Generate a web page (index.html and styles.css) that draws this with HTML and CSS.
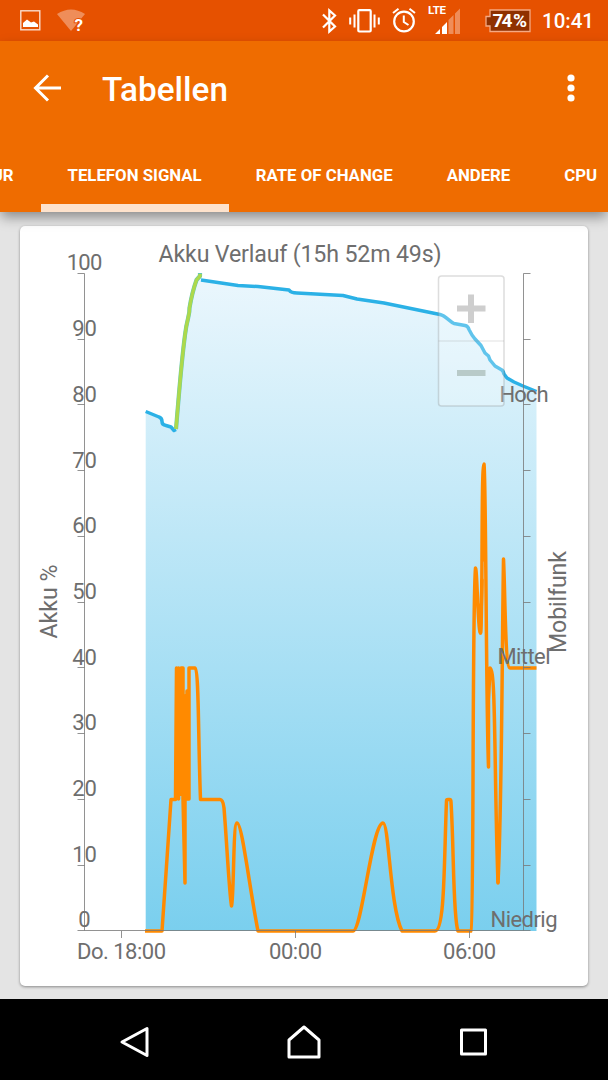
FILE: index.html
```html
<!DOCTYPE html>
<html lang="de">
<head>
  <meta charset="UTF-8">
  <title>Tabellen</title>
  <link rel="stylesheet" href="styles.css">
</head>
<body>
  <div class="screen">
    <div class="status-bar">
      <div class="status-left">
        <svg width="21" height="21" viewBox="0 0 21 21">
          <rect x=".8" y=".8" width="19" height="19" fill="none" stroke="#fff" stroke-opacity=".8" stroke-width="1.4"/>
          <path d="M3 17v-4l4-3.5 4 3 3-1 4 3V17z" fill="#fff"/>
        </svg>
        <svg class="wifi" width="30" height="24" viewBox="0 0 30 24">
          <path d="M0 5Q14 -4 28 5L14 22z" fill="#fff" fill-opacity=".35"/>
          <text x="17.5" y="21.5" class="wifi-mark">?</text>
        </svg>
      </div>
      <div class="status-right">
        <svg width="17" height="26" viewBox="0 0 17 26">
          <path d="M2 6.5L14 18.5 8.3 23.5V2.5L14 7.5 2 19.5" fill="none" stroke="#fff" stroke-width="2.2"/>
        </svg>
        <svg class="vibrate" width="31" height="24" viewBox="0 0 31 24">
          <rect x="9.3" y="1.2" width="12.4" height="21.3" rx="1" fill="none" stroke="#fff" stroke-width="2.2"/>
          <path d="M5.5 5.5v13M25.5 5.5v13M1.2 8.5v7M29.8 8.5v7" stroke="#fff" stroke-width="2"/>
        </svg>
        <svg class="alarm" width="24" height="25" viewBox="0 0 24 25">
          <circle cx="12" cy="13.5" r="9.8" fill="none" stroke="#fff" stroke-width="2.2"/>
          <path d="M1 5l5.500-4.200M23 5l-5.500-4.200M11.800 7.500v6.500l4.700 3" fill="none" stroke="#fff" stroke-width="2"/>
        </svg>
        <svg class="signal" width="34" height="32" viewBox="0 0 34 32">
          <text x="0" y="9.5" textLength="18" class="lte">LTE</text>
          <path d="M7 30l5-5v5zM14 30v-7l5-5v12z" fill="#fff"/>
          <path d="M20.500 30V16l5-5v19zM27 30V9.500l5-5V30z" fill="#fff" fill-opacity=".35"/>
        </svg>
        <svg class="battery" width="46" height="24" viewBox="0 0 46 24">
          <path d="M5 1H45V22.500H5V17H1V7.500H5z" fill="#8f3100" stroke="#f5a983" stroke-width="1.3"/>
          <text x="7.5" y="17.7" textLength="34.5" class="battery-text">74 %</text>
        </svg>
        <span class="clock">10:41</span>
      </div>
    </div>

    <header class="app-bar">
      <div class="toolbar">
        <svg width="28" height="28" viewBox="0 0 28 28">
          <path d="M15 1.500L2.500 14 15 26.500M2.500 14H28" fill="none" stroke="#fff" stroke-width="3"/>
        </svg>
        <h1>Tabellen</h1>
        <svg class="more" width="8" height="28" viewBox="0 0 8 28">
          <circle cx="4" cy="4" r="3.6"/><circle cx="4" cy="14" r="3.6"/><circle cx="4" cy="24" r="3.6"/>
        </svg>
      </div>
      <nav class="tabs">
        <a class="tab tab-cut">TEMPERATUR</a>
        <a class="tab tab-active">TELEFON SIGNAL</a>
        <a class="tab">RATE OF CHANGE</a>
        <a class="tab">ANDERE</a>
        <a class="tab">CPU</a>
      </nav>
    </header>

    <main class="content">
      <div class="card">
        <svg class="chart" viewBox="20 226 568 760">
          <defs>
            <linearGradient id="fill" gradientUnits="userSpaceOnUse" x1="0" y1="273" x2="0" y2="931">
              <stop offset="0" stop-color="#ebf7fd"/>
              <stop offset="1" stop-color="#7acfee"/>
            </linearGradient>
          </defs>

          <!-- battery level -->
          <path fill="url(#fill)" d="M145.700 411.500L159 417 163 420 164 424.500 172 427 176 430 C180 395 182 340 190 307 C192 291 196 280 200.500 274.500L202 280 236 285 258 286.500 289 290 295 293 343 295.500 357 299 384 303 440 314.500 454 323 467 326 480 345 498 368 505 373 509 378 523 386 536.500 391V931H145.700z"/>
          <path class="level" d="M145.700 411.500L159 417Q162 418 162 421.500Q162 425 166 425.500L171 427 174 430.500 176 429.500"/>
          <path class="level" d="M201 280L238 285.500 258 286.500 289 290Q291 293 297 293L343 295.500Q349 297 357 299L384 303 440 314.500C446 316 449 321 454 323.500L465 325.500Q468 326 469 329.500L472 335 475 339 481 345.500 485 353 488.500 356 490 360 495 366 501 369.500Q503 370 504 374L507 378 514 382 523 386 536.500 391.500"/>
          <path class="charge charge-edge" d="M176 429C179 395 181 365 185 335C187 318 190 315 189.500 308C192 293 194 287 196.500 280L200 276V273"/>
          <path class="charge" d="M176 429C179 395 181 365 185 335C187 318 190 315 189.500 308C192 293 194 287 196.500 280L200 276V274"/>

          <!-- mobile signal -->
          <path class="mobile" d="M145 931H162C165 893 168 840 171 799.500H175.500L176.500 668V798L178.500 668V799L181 668 183 668V799L185 883V696L187 799V691L189 799V668H195C199 670 198 735 200.500 799.500H220Q223 799.500 224 808C227 845 229 890 231.500 906C234 897 233 823 237 823C242 823 249 885 258 931H353C362 931 372 823 383 823C389 823 390 908 402 931H435C445 931 444 860 446.500 801Q446.500 799.500 448 799.500H449.500Q451 799.500 451 802C454 850 453 918 458 931H471C474 928 472 610 475.500 568C477 568 478 633 480.500 633C483 620 481 464 484 464C486 480 486 700 488.500 767V700L490 668C496 668 494 770 498 883C502 800 502 650 503.500 559C505 585 505 668 510 668H536.500"/>
          <path class="mobile mobile-dense" d="M178 670V796M181 670V796M183.500 698V796M187 694V796"/>
          <path class="mobile mobile-mid" d="M478.500 605L480.500 633 482 580M484 468V560M498 830V882"/>

          <!-- axes -->
          <path class="axis" d="M84.500 273.500V930.500M523.500 273.500V930.500M77.500 930.500H530.500"/>
          <path class="axis" d="M77.500 273.500h7M77.500 339.500h7M77.500 404.500h7M77.500 470.500h7M77.500 536.500h7M77.500 602.500h7M77.500 667.500h7M77.500 733.500h7M77.500 799.500h7M77.500 865.500h7"/>
          <path class="axis" d="M523.500 273.500h7M523.500 339.500h7M523.500 404.500h7M523.500 470.500h7M523.500 536.500h7M523.500 602.500h7M523.500 667.500h7M523.500 733.500h7M523.500 799.500h7M523.500 865.500h7"/>
          <path class="axis" d="M121.500 931v7M295.500 931v7M469.500 931v7"/>

          <g class="label">
            <text class="title" x="300" y="262" textLength="283">Akku Verlauf (15h 52m 49s)</text>
            <text x="84.5" y="270" textLength="35.5">100</text>
            <text x="84.5" y="336">90</text>
            <text x="84.5" y="402">80</text>
            <text x="84.5" y="467.5">70</text>
            <text x="84.5" y="533">60</text>
            <text x="84.5" y="599">50</text>
            <text x="84.5" y="664.5">40</text>
            <text x="84.5" y="730">30</text>
            <text x="84.5" y="796">20</text>
            <text x="84.5" y="861.5">10</text>
            <text x="84.5" y="927">0</text>
            <text x="524" y="401.5" textLength="49">Hoch</text>
            <text x="524" y="664" textLength="53">Mittel</text>
            <text x="524" y="927" textLength="67">Niedrig</text>
            <text x="121.5" y="958.5" textLength="89">Do. 18:00</text>
            <text x="295.5" y="958.5" textLength="53">00:00</text>
            <text x="469.5" y="958.5" textLength="53">06:00</text>
            <text class="title" transform="translate(56.500 601.500) rotate(-90)" textLength="74">Akku %</text>
            <text class="title" transform="translate(566 602) rotate(-90)" textLength="102">Mobilfunk</text>
          </g>

          <!-- zoom buttons -->
          <rect class="zoom" x="438.5" y="276" width="65.5" height="130" rx="3"/>
          <path d="M438.500 341H504" stroke="#888" stroke-opacity=".25"/>
          <path d="M457 308.500H485.500M471 294.500V323" stroke="#cecece" stroke-width="6" fill="none"/>
          <path d="M457 373H485.500" stroke="#b8cac9" stroke-width="6"/>
        </svg>
      </div>
    </main>

    <footer class="nav-bar">
      <svg width="30" height="34" viewBox="0 0 30 34">
        <path d="M3 17L28 3.500V30.500z"/>
      </svg>
      <svg width="36" height="36" viewBox="0 0 36 36">
        <path d="M3 16L18 3 33 16V33H3z"/>
      </svg>
      <svg width="30" height="30" viewBox="0 0 30 30">
        <path d="M2.500 3H26.500V27H2.500z"/>
      </svg>
    </footer>
  </div>
</body>
</html>
```
FILE: styles.css
```css
* {
  box-sizing: border-box;
}

body {
  margin: 0;
  font-family: Roboto, sans-serif;
  background: #000;
}

.screen {
  width: 608px;
  height: 1080px;
  display: flex;
  flex-direction: column;
  overflow: hidden;
}

svg {
  display: block;
  flex-shrink: 0;
}

/* status bar */
.status-bar {
  height: 41px;
  padding: 0 15px 0 20px;
  display: flex;
  justify-content: space-between;
  align-items: center;
  background: #e65100;
  color: #fff;
}

.status-left,
.status-right {
  display: flex;
  align-items: center;
}

.wifi {
  margin-left: 16px;
}

.wifi-mark {
  font-size: 17px;
  font-weight: 700;
  fill: #fff;
  stroke: #e65100;
  stroke-width: 2px;
  paint-order: stroke;
}

.vibrate {
  margin-left: 11px;
}

.alarm {
  margin-left: 12px;
}

.signal {
  margin: -2px 0 0 12px;
}

.lte {
  font-size: 11.5px;
  font-weight: 700;
  fill: #fff;
}

.battery {
  margin-left: 23px;
}

.battery-text {
  font-size: 19px;
  font-weight: 700;
  fill: #fff;
}

.clock {
  width: 50px;
  margin-left: 12px;
  font-size: 20.5px;
  font-weight: 500;
  text-indent: -1px;
  white-space: nowrap;
}

/* app bar */
.app-bar {
  position: relative;
  height: 171px;
  flex-shrink: 0;
  display: flex;
  flex-direction: column;
  background: #ef6c00;
  color: #fff;
  box-shadow: 0 6px 12px -1px rgba(0, 0, 0, 0.4);
}

.toolbar {
  height: 94px;
  padding: 0 33px;
  display: flex;
  align-items: center;
}

h1 {
  flex: 1;
  margin: 2px 0 0 41px;
  font-size: 33.3px;
  font-weight: 500;
}

.more {
  fill: #fff;
}

.tabs {
  height: 77px;
  display: flex;
  overflow: hidden;
}

.tab {
  flex-shrink: 0;
  padding: 30px 27px 0;
  font-size: 16.8px;
  line-height: 20px;
  font-weight: 700;
  white-space: nowrap;
}

.tab-cut {
  width: 40.5px;
  padding-left: 0;
  display: flex;
  justify-content: flex-end;
}

.tab-active {
  border-bottom: 8px solid #fde2cc;
}

/* chart card */
.content {
  height: 787px;
  padding: 14px 20px 13px;
  background: #e4e4e4;
}

.card {
  height: 760px;
  background: #fff;
  border-radius: 5px;
  box-shadow: 0 1px 3px rgba(0, 0, 0, 0.4);
}

.chart {
  width: 568px;
  height: 760px;
}

.level,
.charge,
.mobile {
  fill: none;
  stroke-linejoin: round;
}

.level {
  stroke: #2bb1e6;
  stroke-width: 3.5;
}

.charge {
  stroke: #add94b;
  stroke-width: 3.4;
}

.charge-edge {
  stroke: #68c8b2;
  stroke-width: 4.2;
}

.mobile {
  stroke: #ff8a00;
  stroke-width: 3.5;
}

.mobile-dense {
  stroke-width: 4;
}

.mobile-mid {
  stroke-linecap: round;
}

.axis {
  fill: none;
  stroke: #777;
  stroke-opacity: 0.8;
}

.label {
  font-size: 22px;
  fill: #6e6e6e;
  text-anchor: middle;
}

.label .title {
  font-size: 23.2px;
}

.zoom {
  fill: #fff;
  fill-opacity: 0.25;
  stroke: #777;
  stroke-opacity: 0.25;
  stroke-width: 1.5;
}

/* navigation bar */
.nav-bar {
  height: 81px;
  padding: 5px 119px 0 119px;
  display: flex;
  justify-content: space-between;
  align-items: center;
  background: #000;
}

.nav-bar path {
  fill: none;
  stroke: #fff;
  stroke-width: 3;
  stroke-linejoin: round;
}
```
